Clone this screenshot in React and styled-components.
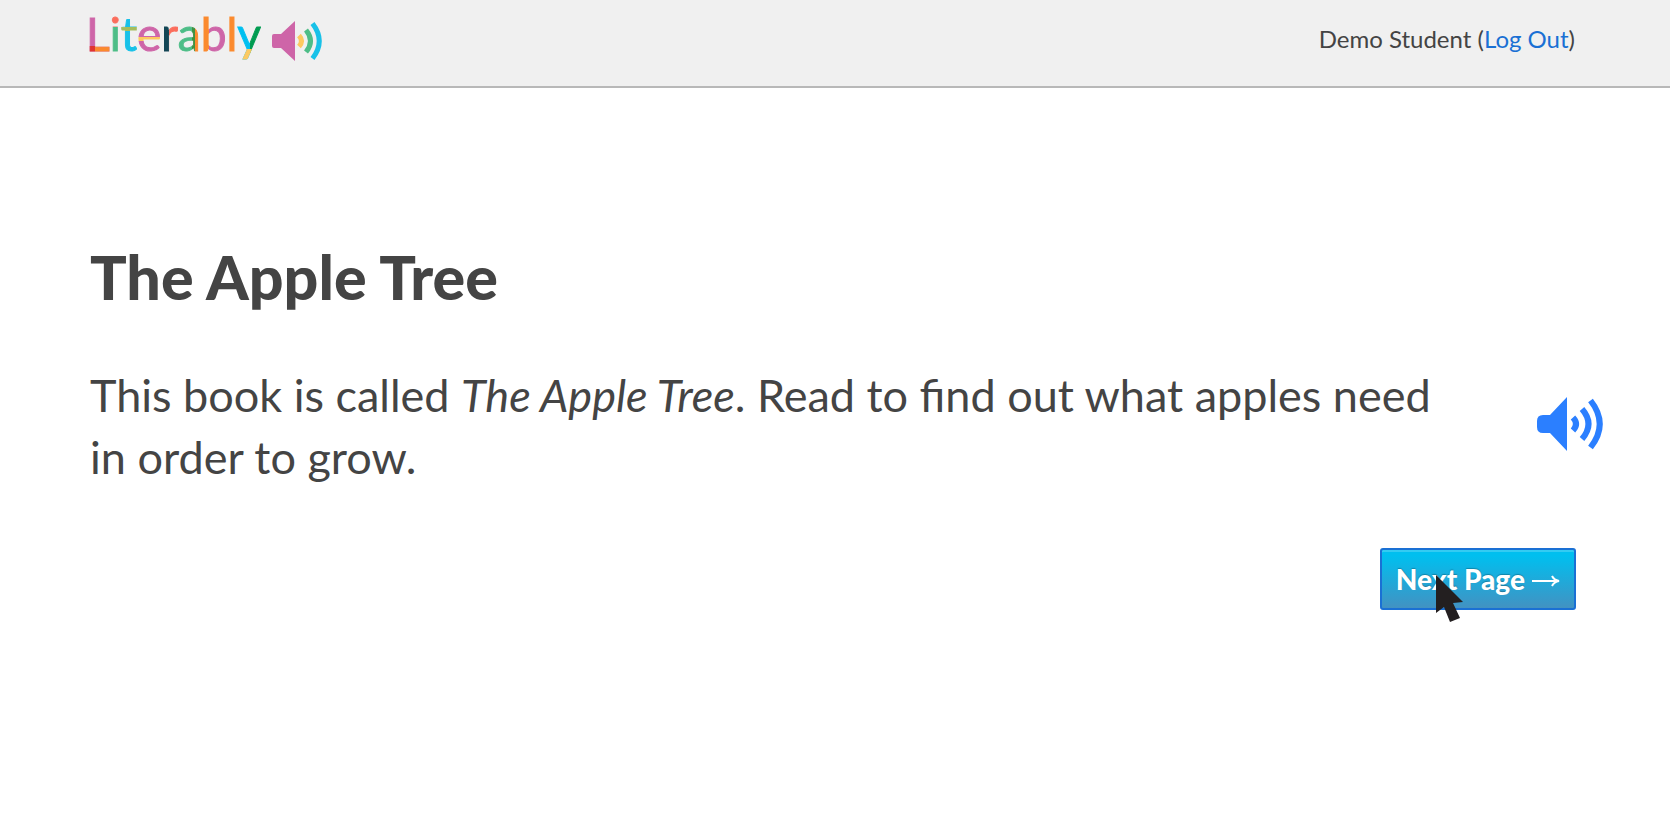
import React from "react";
import styled, { createGlobalStyle } from "styled-components";

const GlobalStyle = createGlobalStyle`
  *, *::before, *::after { box-sizing: border-box; }
  body {
    margin: 0;
    background: #fff;
    color: #444;
    font-family: Lato, "Liberation Sans", sans-serif;
  }
`;

const Page = styled.div`
  min-height: 100vh;
`;

const Header = styled.header`
  display: flex;
  justify-content: space-between;
  align-items: flex-start;
  height: 88px;
  padding: 0 95px 0 86px;
  background: #f0f0f0;
  border-bottom: 2px solid #b8b8b8;
`;

const Logo = styled.a`
  display: flex;
  align-items: flex-start;
  gap: 11px;
  padding-top: 4px;
  text-decoration: none;
`;

const Wordmark = styled.span`
  font-size: 46px;
  line-height: 60px;
  white-space: nowrap;
`;

const Letter = styled.span`
  color: transparent;
  -webkit-text-stroke: 1px transparent;
  background: ${({ $paint }) => $paint};
  background-clip: text;
  -webkit-background-clip: text;
`;

const LogoSpeaker = styled.svg`
  width: 50px;
  height: 40px;
  margin-top: 17px;
`;

const Account = styled.div`
  padding-top: 23px;
  font-size: 24px;
  line-height: 32px;
`;

const AccountLink = styled.a`
  color: #1a70d4;
  text-decoration: none;
`;

const Main = styled.main`
  padding: 149px 67px 48px 90px;
`;

const Title = styled.h1`
  margin: 0;
  font-size: 61px;
  line-height: 80px;
  font-weight: 900;
`;

const Passage = styled.section`
  display: flex;
  justify-content: space-between;
  align-items: center;
  gap: 72px;
  margin-top: 47px;
`;

const Prompt = styled.p`
  margin: 0;
  font-size: 45px;
  line-height: 62px;
`;

const ListenButton = styled.button`
  flex: none;
  padding: 0 0 4px;
  border: 0;
  background: none;
  cursor: pointer;

  svg {
    display: block;
    width: 66px;
    height: 54px;
  }
`;

const Actions = styled.div`
  display: flex;
  justify-content: flex-end;
  margin-top: 60px;
  padding-right: 27px;
`;

const NextControl = styled.div`
  position: relative;
`;

const NextButton = styled.button`
  display: flex;
  align-items: center;
  gap: 7px;
  height: 62px;
  padding: 0 14px;
  border: 2px solid #1a70d4;
  border-radius: 3px;
  background: linear-gradient(#00bfef 10%, #4292c2);
  box-shadow: inset 0 2px 0 rgba(255, 255, 255, 0.2);
  color: #fff;
  font-family: inherit;
  font-size: 28px;
  line-height: 36px;
  font-weight: 900;
  text-shadow: 0 -1px 1px rgba(0, 0, 0, 0.25);
  white-space: nowrap;
  cursor: pointer;
`;

const Arrow = styled.svg`
  width: 28px;
  height: 12px;
  margin-top: 4px;
`;

const Pointer = styled.svg`
  position: absolute;
  left: 56px;
  top: 27px;
  width: 28px;
  height: 48px;
  pointer-events: none;
`;

const pink = "#ce65a8";
const letters = [
  ["L", `linear-gradient(90deg, #e0342f 38%, #fb8a2e 38%) 0 40px / 100% 20px no-repeat, ${pink}`],
  ["i", "linear-gradient(#fb6d5c 38%, #4dbd87 38%)"],
  ["t", "linear-gradient(#18c1e8 38%, #a5bd5c 38% 46%, #18c1e8 46%)"],
  ["e", `linear-gradient(${pink} 56%, #fdc960 56% 64%, ${pink} 64%)`],
  ["r", "linear-gradient(90deg, #134655 46%, #fb6d5c 46%)"],
  ["a", "linear-gradient(90deg, #4dbd87 63%, #3f9140 63% 76%, #fb8a2e 76%)"],
  ["b", `linear-gradient(90deg, #fb8a2e 30%, ${pink} 30%)`],
  ["l", "#fb8a2e"],
  ["y", "linear-gradient(transparent 78%, #fdc960 78%), linear-gradient(90deg, #00bff0 56%, #009b50 56%)"],
];

export default function App() {
  return (
    <Page>
      <GlobalStyle />
      <Header>
        <Logo href="#home" aria-label="Literably">
          <Wordmark>
            {letters.map(([letter, paint], i) => (
              <Letter key={i} $paint={paint}>{letter}</Letter>
            ))}
          </Wordmark>
          <LogoSpeaker viewBox="0 0 50 40" aria-hidden="true">
            <path d="M2 13H9L23 0V40L9 27H2Q0 27 0 25V15Q0 13 2 13Z" fill={pink} />
            <g fill="none" strokeWidth="5">
              <path d="M27 14.500Q32 20 27 25.500" stroke="#fdc960" />
              <path d="M34 9Q43 20 34 31" stroke="#4dbd87" />
              <path d="M40.500 2.500Q54 20 40.500 37.500" stroke="#18c1e8" />
            </g>
          </LogoSpeaker>
        </Logo>
        <Account>
          Demo Student (<AccountLink href="#logout">Log Out</AccountLink>)
        </Account>
      </Header>
      <Main>
        <Title>The Apple Tree</Title>
        <Passage>
          <Prompt>
            This book is called <em>The Apple Tree</em>. Read to find out what apples need in order to grow.
          </Prompt>
          <ListenButton type="button" aria-label="Listen">
            <svg viewBox="0 0 66 54" aria-hidden="true">
              <path d="M6 18H13L30 0V54L13 36H6Q0 36 0 30V24Q0 18 6 18Z" fill="#2b7fff" />
              <g fill="none" stroke="#2b7fff" strokeWidth="6">
                <path d="M36 20.500Q42 27 36 33.500" />
                <path d="M45 12Q58 27 45 42" />
                <path d="M53.500 3.500Q72 27 53.500 50.500" />
              </g>
            </svg>
          </ListenButton>
        </Passage>
        <Actions>
          <NextControl>
            <NextButton type="button">
              Next Page
              <Arrow viewBox="0 0 28 12" aria-hidden="true">
                <path d="M0 6H26M20 1Q22 5 27 6Q22 7 20 11" fill="none" stroke="#fff" strokeWidth="2" />
              </Arrow>
            </NextButton>
            <Pointer viewBox="0 0 28 48" aria-hidden="true">
              <path d="M0 0L27 27L17 28L24 43L14 47L8 32L0 38Z" fill="#231f20" />
            </Pointer>
          </NextControl>
        </Actions>
      </Main>
    </Page>
  );
}
